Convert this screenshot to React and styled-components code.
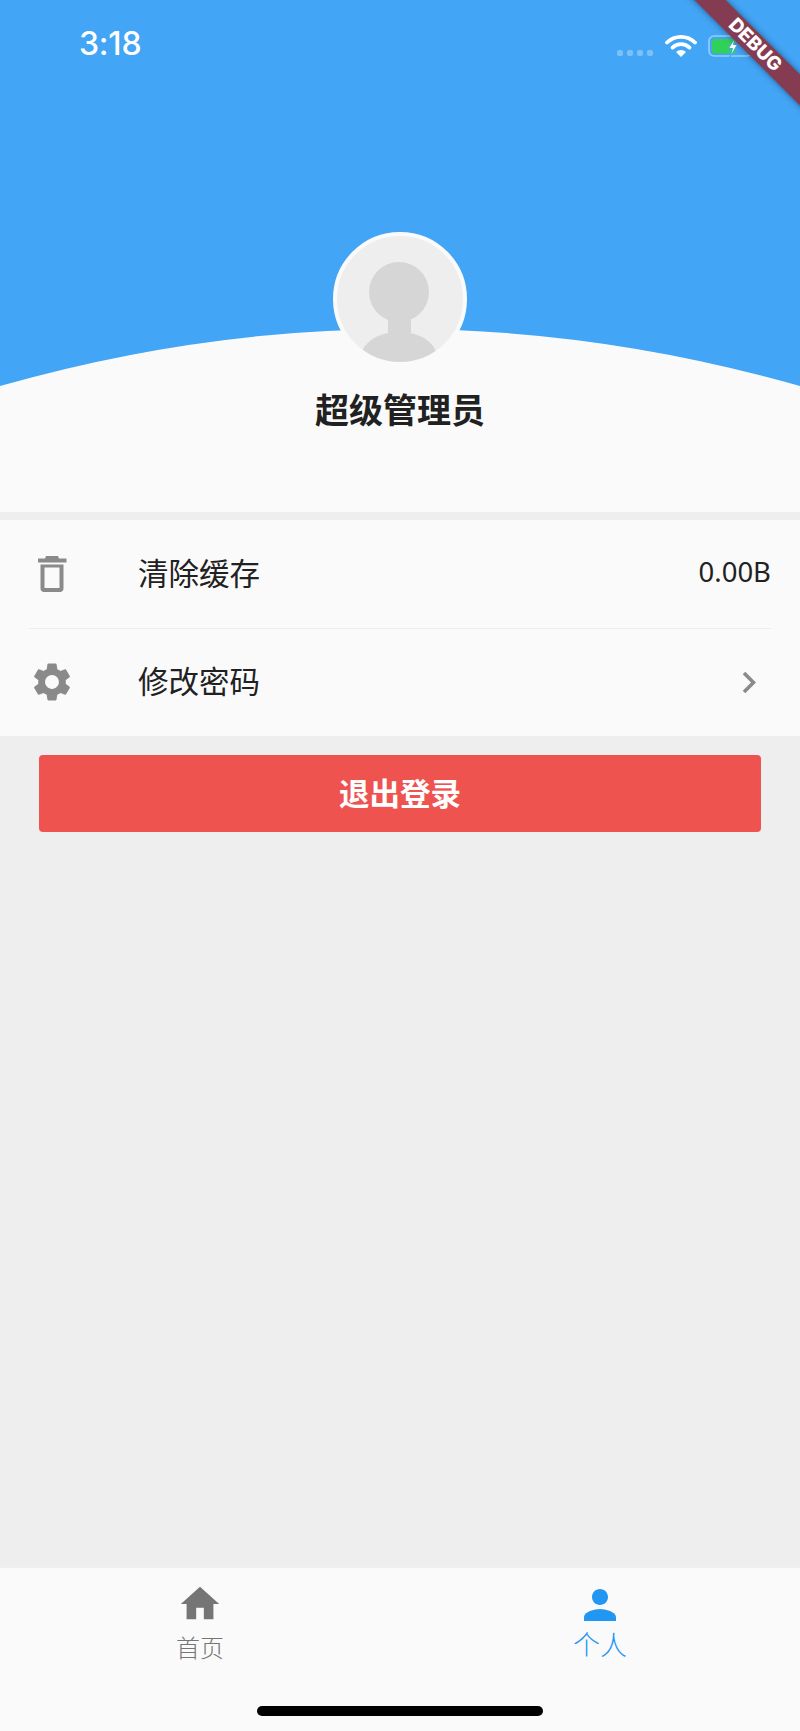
import React from 'react';
import styled, { createGlobalStyle } from 'styled-components';

const Global = createGlobalStyle`
  html, body { margin: 0; padding: 0; background: #eeeeee; }
  * { box-sizing: border-box; }
  body { font-family: "Noto Sans CJK SC", "Noto Sans", sans-serif; color: #212121; }
`;

const Page = styled.div`
  position: relative;
  width: 800px;
  height: 1731px;
  overflow: hidden;
  display: flex;
  flex-direction: column;
  background: #eeeeee;
`;

const Hero = styled.section`
  position: relative;
  height: 512px;
  flex: none;
  background: #fafafa;
  display: flex;
  flex-direction: column;
  align-items: center;
`;

const Curve = styled.svg`
  position: absolute;
  inset: 0 0 auto 0;
  display: block;
`;

const StatusBar = styled.div`
  position: relative;
  width: 100%;
  height: 88px;
  flex: none;
  display: flex;
  align-items: center;
  padding: 0 46px 0 79px;
  color: #fff;
`;

const Time = styled.span`
  font-family: Inter, "Liberation Sans", sans-serif;
  font-size: 32px;
  font-weight: 500;
  line-height: 1;
  letter-spacing: -0.2px;
`;

const StatusIcons = styled.div`
  margin-left: auto;
  display: flex;
  align-items: center;
  margin-top: 4px;
`;

const SignalDots = styled.div`
  display: flex;
  gap: 3.5px;
  margin: 14px 12px 0 0;
`;

const Dot = styled.i`
  display: block;
  width: 6.5px;
  height: 6.5px;
  border-radius: 2px;
  background: rgba(255, 255, 255, 0.3);
`;

const Banner = styled.div`
  position: absolute;
  top: 45px;
  left: 755px;
  width: 220px;
  height: 22px;
  transform: translate(-50%, -50%) rotate(45deg);
  background: #853c52;
  box-shadow: 0 0 6px rgba(0, 0, 0, 0.45);
  color: #fff;
  font-family: Inter, "Liberation Sans", sans-serif;
  font-weight: 800;
  font-size: 19px;
  line-height: 22px;
  text-align: center;
  z-index: 5;
`;

const Avatar = styled.div`
  position: relative;
  margin-top: 144px;
  width: 134px;
  height: 134px;
  flex: none;
  border-radius: 50%;
  border: 4px solid #fafafa;
  background: #eeeeee;
  overflow: hidden;
`;

const AvatarArt = styled.svg`
  display: block;
`;

const Name = styled.h1`
  position: relative;
  margin: 18px 0 0;
  font-size: 34px;
  line-height: 50px;
  font-weight: 700;
  color: #212121;
`;

const List = styled.section`
  margin-top: 8px;
  height: 216px;
  flex: none;
  background: #fafafa;
  display: flex;
  flex-direction: column;
  padding: 0 29px;
`;

const Row = styled.div`
  flex: 1;
  display: flex;
  align-items: center;
  border-bottom: ${p => (p.$divider ? '1px solid #eeeeee' : 'none')};
`;

const IconCell = styled.div`
  width: 109px;
  flex: none;
  display: flex;
  align-items: center;
`;

const Label = styled.span`
  font-size: 30.5px;
  line-height: 44px;
  margin-top: -4px;
  color: #212121;
`;

const Value = styled.span`
  margin-left: auto;
  font-family: "Noto Sans", sans-serif;
  font-size: 27.5px;
  line-height: 44px;
  margin-top: -3px;
  color: #212121;
`;

const Chevron = styled.svg`
  margin-left: auto;
  margin-right: 15px;
  display: block;
`;

const LogoutButton = styled.button`
  display: block;
  margin: 19px 39px 0;
  height: 77px;
  flex: none;
  border: 0;
  border-radius: 4px;
  background: #ef5350;
  color: #fff;
  font-family: inherit;
  font-size: 30.5px;
  line-height: 40px;
  font-weight: 700;
  padding: 0 0 4px;
`;

const Spacer = styled.div`
  flex: 1;
`;

const Nav = styled.nav`
  position: relative;
  height: 164px;
  flex: none;
  background: #fafafa;
  border-top: 1px solid #f0f0f0;
  display: grid;
  grid-template-columns: 1fr 1fr;
  align-items: start;
`;

const NavItem = styled.div`
  display: flex;
  flex-direction: column;
  align-items: center;
  padding-top: 13px;
  color: ${p => (p.$active ? '#2196f3' : '#757575')};
`;

const NavText = styled.span`
  font-size: ${p => (p.$active ? '27px' : '24px')};
  font-weight: 300;
  line-height: 36px;
  margin-top: ${p => (p.$active ? '-3px' : '2px')};
`;

const HomeIndicator = styled.div`
  position: absolute;
  left: 257px;
  bottom: 15px;
  width: 286px;
  height: 10px;
  border-radius: 5px;
  background: #000;
`;

const curveD = 'M0 0H800V386Q400 272 0 386Z';

export default function App() {
  return (
    <Page>
      <Global />
      <Hero>
        <Curve width="800" height="400" viewBox="0 0 800 400">
          <path d={curveD} fill="#42a5f5" />
        </Curve>
        <StatusBar>
          <Time>3:18</Time>
          <StatusIcons>
            <SignalDots>
              <Dot /><Dot /><Dot /><Dot />
            </SignalDots>
            <svg width="32" height="23" viewBox="0 0 32 23" fill="none" style={{ marginTop: -2 }}>
              <path d="M2 8.5A20 20 0 0 1 30 8.5" stroke="#fff" strokeWidth="3.8" strokeLinecap="round" />
              <path d="M7.5 13.6A12 12 0 0 1 24.5 13.6" stroke="#fff" strokeWidth="3.8" strokeLinecap="round" />
              <path d="M16 23L11 18A7 7 0 0 1 21 18Z" fill="#fff" />
            </svg>
            <svg width="46" height="23" viewBox="0 0 46 23" style={{ marginLeft: 11 }}>
              <rect x="1" y="1" width="43" height="20" rx="5" fill="none" stroke="#fff" strokeOpacity="0.45" strokeWidth="1.6" />
              <rect x="4" y="4" width="24" height="14.5" rx="2.5" fill="#30d158" />
              <path d="M27.5 2L20.5 13.5H24.5L22 22L29.5 9.5H25.5Z" fill="#fff" stroke="#42a5f5" strokeWidth="1" />
            </svg>
          </StatusIcons>
        </StatusBar>
        <Avatar>
          <AvatarArt width="126" height="126" viewBox="0 0 126 126">
            <path d="M51 64H74V100H51Z" fill="#d6d6d6" />
            <circle cx="62" cy="56" r="30" fill="#d6d6d6" />
            <path d="M23 126C23 107 40 96 62 96C84 96 101 107 101 126Z" fill="#d6d6d6" />
          </AvatarArt>
        </Avatar>
        <Name>超级管理员</Name>
      </Hero>
      <List>
        <Row $divider>
          <IconCell>
            <svg width="30" height="36" viewBox="0 0 30 36" style={{ marginLeft: 8 }}>
              <path
                fill="#8a8a8a"
                fillRule="evenodd"
                d="M9 0H21L22 2.5H29.5V6.5H1V2.5H8ZM3.5 8.5H26.5V32.5C26.5 34.5 25 36 23 36H7C5 36 3.5 34.5 3.5 32.5ZM7.5 11.5V32H22.5V11.5Z"
              />
            </svg>
          </IconCell>
          <Label>清除缓存</Label>
          <Value>0.00B</Value>
        </Row>
        <Row>
          <IconCell>
            <svg width="46" height="46" viewBox="0 0 24 24" fill="#8a8a8a">
              <path d="M19.14 12.94c.04-.3.06-.61.06-.94 0-.32-.02-.64-.07-.94l2.03-1.58c.18-.14.23-.41.12-.61l-1.92-3.32c-.12-.22-.37-.29-.59-.22l-2.39.96c-.5-.38-1.03-.7-1.62-.94l-.36-2.54c-.04-.24-.24-.41-.48-.41h-3.84c-.24 0-.43.17-.47.41l-.36 2.54c-.59.24-1.13.57-1.62.94l-2.39-.96c-.22-.08-.47 0-.59.22L2.74 8.87c-.12.21-.08.47.12.61l2.03 1.58c-.05.3-.09.63-.09.94s.02.64.07.94l-2.03 1.58c-.18.14-.23.41-.12.61l1.92 3.32c.12.22.37.29.59.22l2.39-.96c.5.38 1.03.7 1.62.94l.36 2.54c.05.24.24.41.48.41h3.84c.24 0 .44-.17.47-.41l.36-2.54c.59-.24 1.13-.56 1.62-.94l2.39.96c.22.08.47 0 .59-.22l1.92-3.32c.12-.22.07-.47-.12-.61l-2.01-1.58zM12 15.6c-1.98 0-3.6-1.62-3.6-3.6s1.62-3.6 3.6-3.6 3.6 1.62 3.6 3.6-1.62 3.6-3.6 3.6z" />
            </svg>
          </IconCell>
          <Label>修改密码</Label>
          <Chevron width="14" height="23" viewBox="0 0 14 23" fill="none">
            <path d="M2 2L11.5 11.5L2 21" stroke="#8a8a8a" strokeWidth="3.6" />
          </Chevron>
        </Row>
      </List>
      <LogoutButton>退出登录</LogoutButton>
      <Spacer />
      <Nav>
        <NavItem>
          <svg width="46" height="46" viewBox="0 0 24 24" fill="currentColor">
            <path d="M10 20v-6h4v6h5v-8h3L12 3 2 12h3v8z" />
          </svg>
          <NavText>首页</NavText>
        </NavItem>
        <NavItem $active>
          <svg width="48" height="48" viewBox="0 0 24 24" fill="currentColor">
            <path d="M12 12c2.21 0 4-1.79 4-4s-1.79-4-4-4-4 1.79-4 4 1.79 4 4 4zm0 2c-2.67 0-8 1.34-8 4v2h16v-2c0-2.66-5.33-4-8-4z" />
          </svg>
          <NavText $active>个人</NavText>
        </NavItem>
        <HomeIndicator />
      </Nav>
      <Banner>DEBUG</Banner>
    </Page>
  );
}
